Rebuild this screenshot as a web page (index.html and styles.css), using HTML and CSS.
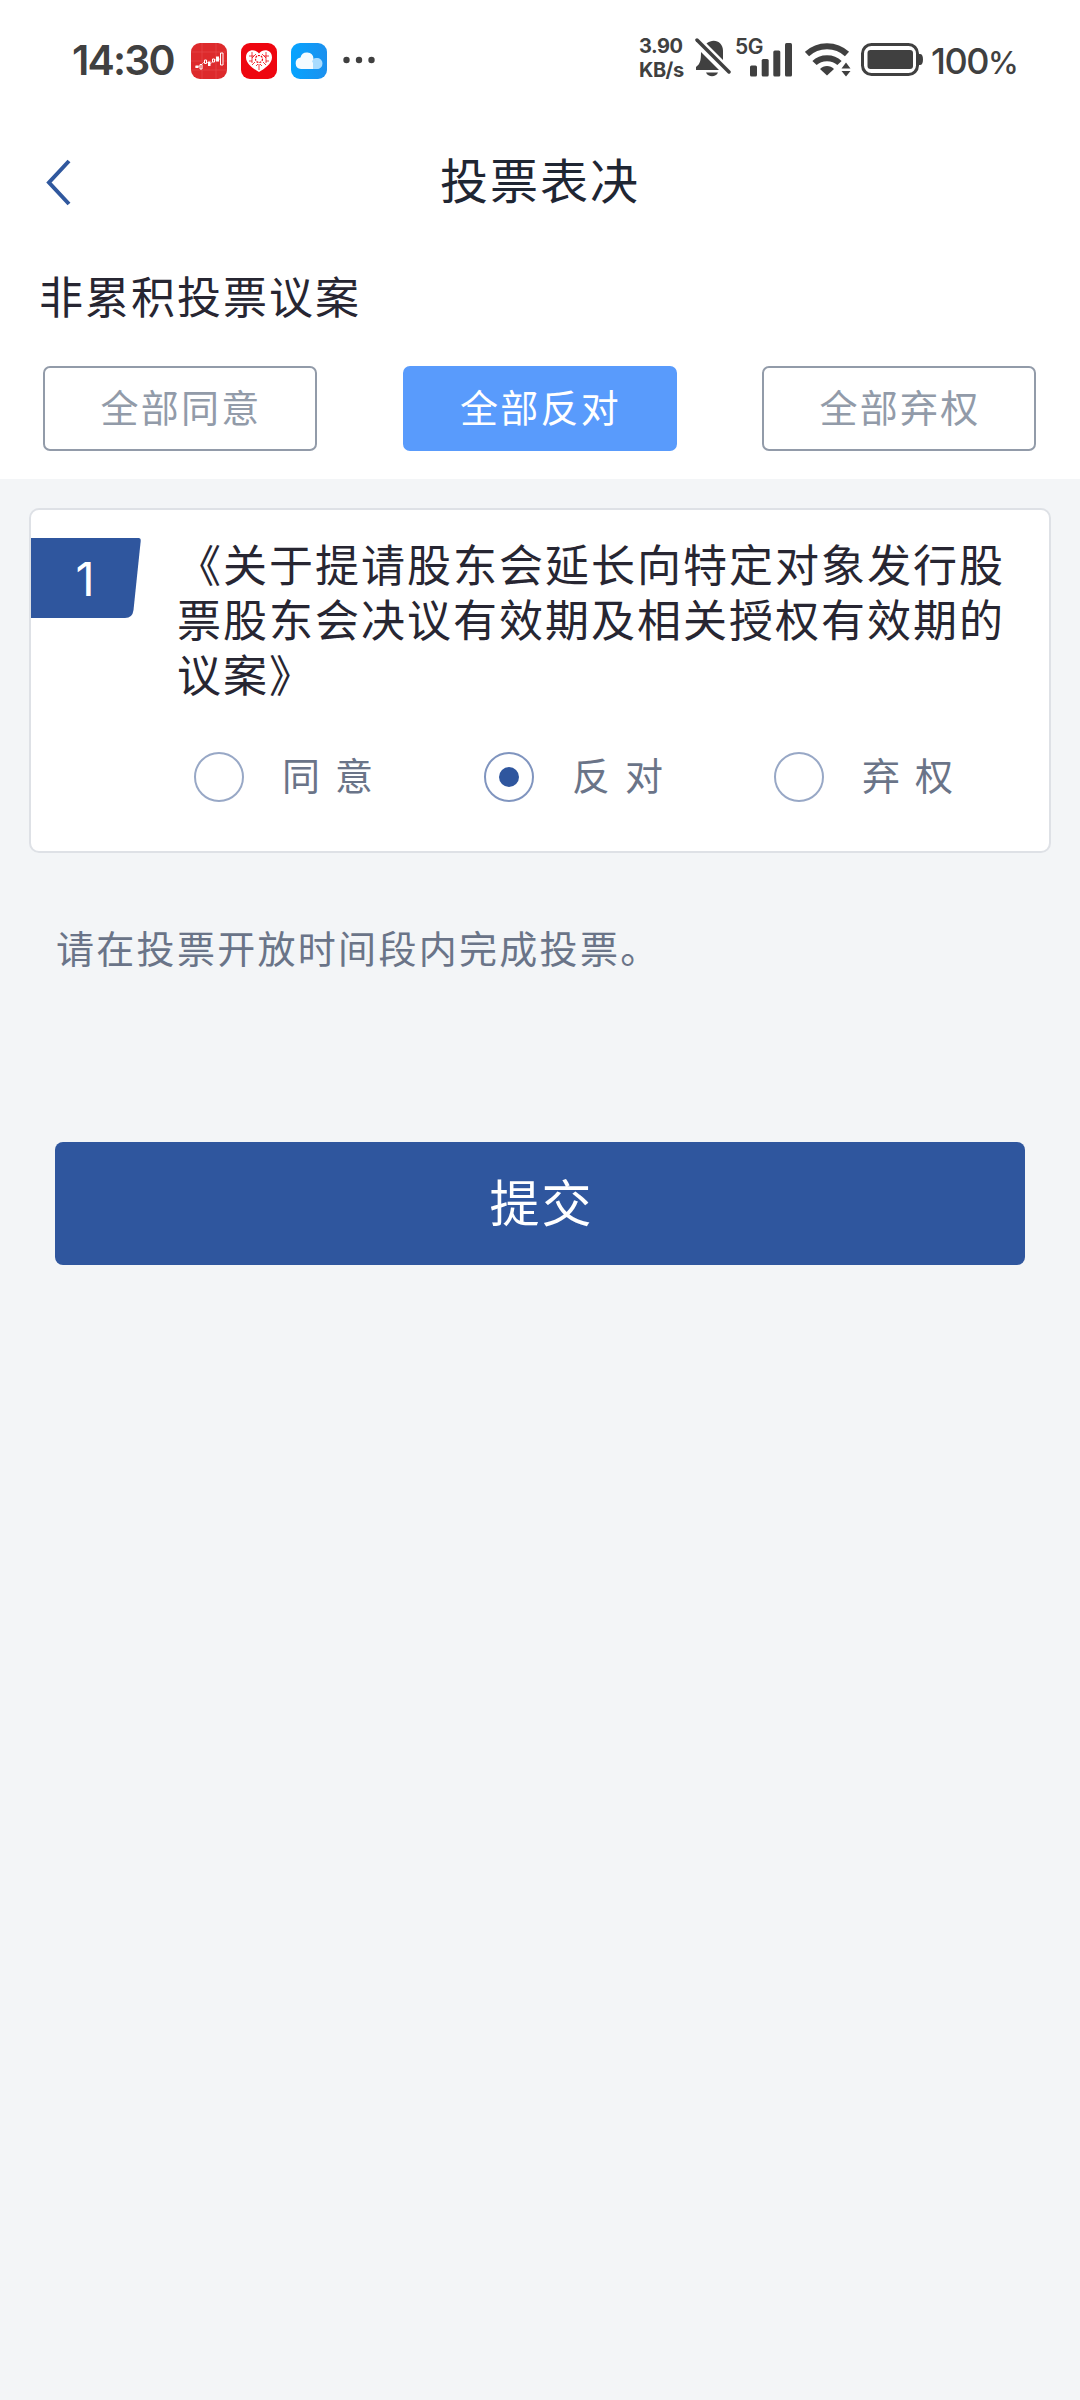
FILE: index.html
```html
<!DOCTYPE html>
<html lang="zh-CN">
<head>
    <meta charset="UTF-8">
    <meta name="viewport" content="width=device-width, initial-scale=1.0">
    <title>投票表决</title>
    <link rel="stylesheet" href="styles.css">
</head>
<body>
    <div class="status-bar">
        <div class="status-left">
            <span class="time">14:30</span>
            <svg class="app-icon" viewBox="0 0 36 36">
                <rect width="36" height="36" rx="9" fill="#dd2a2c"/>
                <path d="M0 9h36M0 18h36M0 27h36M11 0v36M25 0v36" stroke="#e5494a" stroke-width="0.7"/>
                <path d="M4 24l5-1 5-5 5 3 5-4 5-1" stroke="#fff" stroke-width="0.6" fill="none"/>
                <path d="M4.500 22.500h3v2.500h-3zM17 18.500h2.500v4.500H17zM25 13.500h3v5h-3z" fill="#fff"/>
                <path d="M9 21.500h2v4.500H9zM13.500 17h2v3.500h-2zM21.500 16h2v3h-2zM29.500 10h2.500v12h-2.500z" fill="#dd2a2c" stroke="#fff"/>
            </svg>
            <svg class="app-icon" viewBox="0 0 36 36">
                <rect width="36" height="36" rx="9" fill="#ee0610"/>
                <path d="M18 29C13 26 5 21 5 14.500C5 7 13.500 5 18 10.500C22.500 5 31 7 31 14.500C31 21 23 26 18 29z" fill="#fff"/>
                <path d="M8 13h5M11 9v11M15 11l-4 4M14 19l-3 3M28 13h-5M25 9v11M21 11l4 4M22 19l3 3M18 21v6M15 23l2-2M21 23l-2-2M8 18h3M28 18h-3" stroke="#ee0610" stroke-width="0.8"/>
                <circle cx="18" cy="16" r="3.500" fill="none" stroke="#ee0610" stroke-width="1.200" stroke-dasharray="2 1"/>
            </svg>
            <svg class="app-icon" viewBox="0 0 36 36">
                <defs>
                    <linearGradient id="sky" x1="0" y1="0" x2="1" y2="0">
                        <stop offset="0" stop-color="#06a4ff"/>
                        <stop offset="1" stop-color="#1c90ee"/>
                    </linearGradient>
                </defs>
                <rect width="36" height="36" rx="9" fill="url(#sky)"/>
                <path d="M22 26V20a6 6 0 0 1 4-5a5.700 5.700 0 0 1 0 11z" fill="#a9dcff"/>
                <path d="M10 26a5.800 5.800 0 0 1 -.5-11.500A6.600 6.600 0 0 1 22.500 15.500A6 6 0 0 0 22 20V26z" fill="#f4fbff"/>
                <path d="M22 16a6 6 0 0 1 4.500-1a5.500 5.500 0 0 1 5 5.500A5.500 5.500 0 0 1 26 26H22z" fill="#a9dcff"/>
            </svg>
            <svg class="more" viewBox="0 0 32 8">
                <circle cx="3.500" cy="4" r="3.200"/>
                <circle cx="16" cy="4" r="3.200"/>
                <circle cx="28.500" cy="4" r="3.200"/>
            </svg>
        </div>
        <div class="status-right">
            <div class="speed"><span>3.90</span><span>KB/s</span></div>
            <svg class="bell" viewBox="0 0 36 40">
                <path d="M11.500 5.500C19 -0.500 28 4 28 13V22z"/>
                <path d="M6 14L24 32H1V29C5 26 6 23 6 14z"/>
                <path d="M11 34.500h12c-2 5-10 5-12 0z"/>
                <path d="M2 2L34 34" stroke="#404040" stroke-width="3.500" stroke-linecap="round"/>
            </svg>
            <span class="net">5G</span>
            <svg class="signal" viewBox="0 0 43 34">
                <rect x="0" y="22.500" width="7" height="11" rx="1.500"/>
                <rect x="11.700" y="16" width="7" height="17.500" rx="1.500"/>
                <rect x="23.300" y="7.500" width="7" height="26" rx="1.500"/>
                <rect x="35" y="0" width="7" height="33.500" rx="1.500"/>
            </svg>
            <svg class="wifi" viewBox="0 0 46 34">
                <path d="M2 11C13 0.500 31 0.500 42 11" fill="none" stroke="#404040" stroke-width="6"/>
                <path d="M9.500 20C16 13.500 28 13.500 34.500 20" fill="none" stroke="#404040" stroke-width="6"/>
                <path d="M15 26C18.500 22 25.500 22 29 26L22 32.500z"/>
                <path d="M36.500 25.500L41 19.500L45.500 25.500zM36.500 28H45.500L41 33.500z"/>
            </svg>
            <svg class="battery" viewBox="0 0 63 33">
                <rect x="1.500" y="1.500" width="55" height="30" rx="9" fill="none" stroke="#404040" stroke-width="3"/>
                <rect x="6.500" y="7" width="45.500" height="19" rx="3"/>
                <path d="M57.500 11h1.500c2 0 3 2 3 5.500s-1 5.500-3 5.500h-1.500z"/>
            </svg>
            <span class="percent">100<small>%</small></span>
        </div>
    </div>

    <div class="nav-bar">
        <svg class="back" viewBox="0 0 28 48">
            <path d="M26 3L6 24.500L26 46" fill="none" stroke="#30589e" stroke-width="4"/>
        </svg>
        <h1>投票表决</h1>
    </div>

    <div class="batch">
        <h2>非累积投票议案</h2>
        <div class="batch-buttons">
            <button class="btn">全部同意</button>
            <button class="btn active">全部反对</button>
            <button class="btn">全部弃权</button>
        </div>
    </div>

    <div class="proposal-card">
        <div class="number">
            <svg class="number-bg" viewBox="0 0 110 80">
                <path d="M0 0H107.500Q110 0 109.700 3L102.500 72Q101.500 80 94 80H0z" fill="#2f569e"/>
            </svg>
            <span>1</span>
        </div>
        <div class="proposal-body">
            <p class="proposal-title">《关于提请股东会延长向特定对象发行股票股东会决议有效期及相关授权有效期的议案》</p>
            <div class="options">
                <div class="option"><i class="radio"></i><span>同 意</span></div>
                <div class="option"><i class="radio checked"></i><span>反 对</span></div>
                <div class="option"><i class="radio"></i><span>弃 权</span></div>
            </div>
        </div>
    </div>

    <p class="tip">请在投票开放时间段内完成投票。</p>
    <button class="submit">提交</button>
</body>
</html>
```

FILE: styles.css
```css
* {
    box-sizing: border-box;
}
body {
    margin: 0;
    width: 1080px;
    min-height: 2400px;
    background: #f3f5f7;
    font-family: "Noto Sans CJK SC", sans-serif;
    letter-spacing: 2px;
    color: #272632;
}
h1, h2, p {
    margin: 0;
    font-weight: normal;
}
svg {
    display: block;
    flex: none;
}
button {
    font-family: inherit;
    letter-spacing: inherit;
    padding: 0;
}

/* 状态栏 */
.status-bar {
    display: flex;
    justify-content: space-between;
    height: 122px;
    padding: 0 64px 0 72px;
    background: #fff;
    color: #404040;
    fill: #404040;
    font-family: Inter, sans-serif;
    font-weight: 600;
    letter-spacing: 0;
}
.status-left,
.status-right {
    display: flex;
    align-items: center;
    height: 120px;
}
.time {
    width: 105px;
    font-size: 41px;
    letter-spacing: -1.800px;
    white-space: nowrap;
}
.app-icon {
    width: 36px;
    height: 36px;
    margin: 2px 0 0 14px;
}
.more {
    width: 32px;
    height: 8px;
    margin-left: 16px;
}
.speed {
    display: flex;
    flex-direction: column;
    width: 56px;
    padding-bottom: 4px;
    font-size: 20px;
    font-weight: 700;
    line-height: 24px;
    letter-spacing: -0.5px;
}
.bell {
    width: 36px;
    height: 40px;
    margin-bottom: 4px;
}
.net {
    width: 15px;
    margin: 0 0 27px 4px;
    font-size: 21px;
    letter-spacing: -0.5px;
    white-space: nowrap;
}
.signal {
    width: 43px;
    height: 34px;
}
.wifi {
    width: 46px;
    height: 34px;
    margin-left: 12px;
}
.battery {
    width: 63px;
    height: 33px;
    margin: 0 0 1px 10px;
}
.percent {
    width: 85px;
    margin: 2px 0 0 7px;
    font-size: 36px;
    font-weight: 500;
    letter-spacing: -1.500px;
    white-space: nowrap;
}
.percent small {
    font-size: 31px;
}

/* 导航 */
.nav-bar {
    display: flex;
    align-items: center;
    height: 120px;
    padding: 0 44px;
    background: #fff;
    color: #1f2633;
}
.nav-bar h1 {
    flex: 1;
    margin-right: 27px;
    padding-bottom: 8px;
    font-size: 48px;
    text-align: center;
}
.back {
    width: 28px;
    height: 48px;
    margin-left: -1px;
}

/* 批量操作 */
.batch {
    height: 237px;
    padding: 23px 44px 0 39px;
    background: #fff;
}
.batch h2 {
    font-size: 44px;
    line-height: 60px;
}
.batch-buttons {
    display: flex;
    justify-content: space-between;
    margin: 41px 0 0 4px;
}
.btn {
    width: 274px;
    height: 85px;
    padding: 0 0 7px 2px;
    border: 2px solid #929ba9;
    border-radius: 7px;
    background: #fff;
    color: #929ba9;
    font-size: 38px;
    letter-spacing: 2.300px;
}
.btn.active {
    border-color: #599bfc;
    background: #599bfc;
    color: #fff;
}

/* 议案 */
.proposal-card {
    display: flex;
    width: 1022px;
    height: 345px;
    margin: 29px 0 0 29px;
    padding-top: 28px;
    border: 2px solid #dee1e6;
    border-radius: 10px;
    background: #fff;
}
.number {
    display: grid;
    width: 110px;
    height: 80px;
    color: #fff;
    font-family: Inter, sans-serif;
    font-size: 47px;
    line-height: 82px;
    text-align: center;
}
.number-bg,
.number span {
    grid-area: 1 / 1;
}
.number-bg {
    width: 110px;
    height: 80px;
}
.proposal-body {
    margin: -2px 0 0 36px;
}
.proposal-title {
    width: 832px;
    font-size: 44px;
    line-height: 55px;
}
.options {
    display: flex;
    margin: 51px 0 0 17px;
}
.option {
    display: flex;
    align-items: center;
    width: 290px;
    height: 50px;
    color: #6a7488;
    font-size: 38px;
    word-spacing: 2.500px;
}
.option span {
    margin: -8px 0 0 38px;
}
.radio {
    display: grid;
    place-items: center;
    width: 50px;
    height: 50px;
    border: 2px solid #98a8c6;
    border-radius: 50%;
}
.radio.checked {
    border-color: #8095bf;
}
.radio.checked::after {
    content: "";
    width: 20px;
    height: 20px;
    border-radius: 50%;
    background: #2f569e;
}

.tip {
    margin: 66px 0 0 56px;
    color: #6a7488;
    font-size: 38px;
    line-height: 56px;
    letter-spacing: 2.300px;
}
.submit {
    display: block;
    width: 970px;
    height: 123px;
    margin: 167px 0 0 55px;
    padding: 0 0 7px 3px;
    border: none;
    border-radius: 8px;
    background: #2f569e;
    color: #fff;
    font-size: 50px;
}
```
